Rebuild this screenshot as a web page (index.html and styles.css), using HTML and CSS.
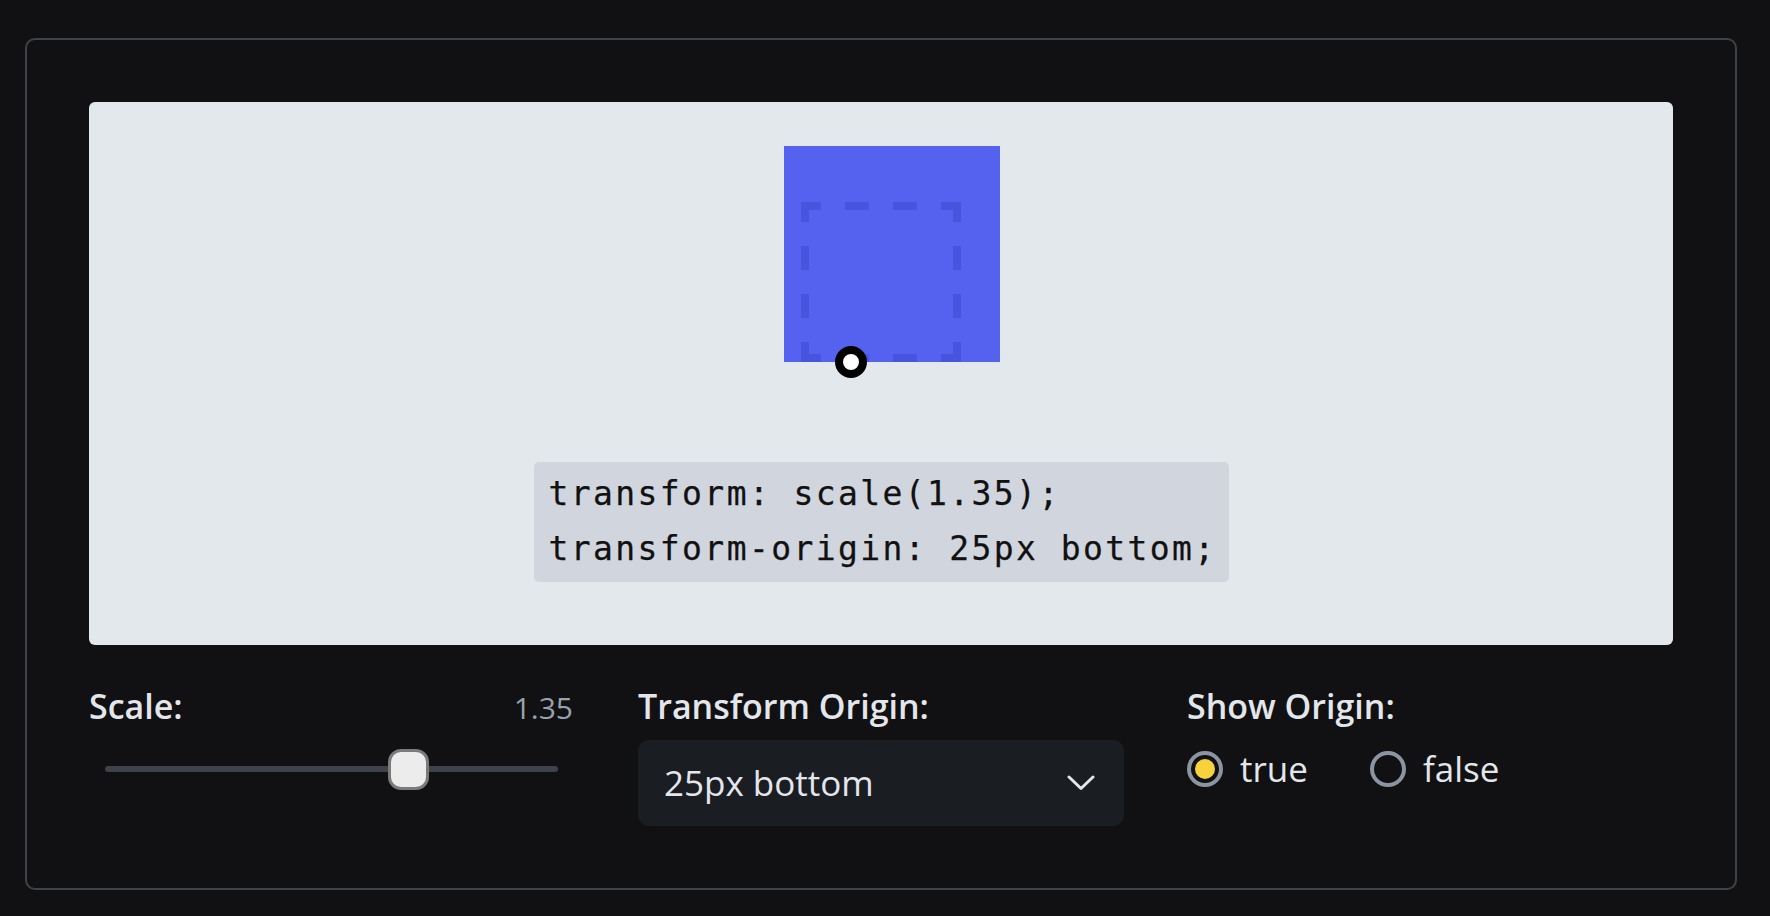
FILE: index.html
```html
<!DOCTYPE html>
<html lang="en">
<head>
<meta charset="utf-8">
<title>Transform origin demo</title>
<link rel="stylesheet" href="styles.css">
</head>
<body>
<div class="demo">
  <div class="preview">
    <div class="stage">
      <div class="scaled"></div>
      <svg class="outline" width="160" height="160" viewBox="0 0 160 160">
        <g stroke="#4654de" stroke-width="8" stroke-dasharray="20 24 24 24 24 24 20">
          <line x1="0" y1="4" x2="160" y2="4"/>
          <line x1="0" y1="156" x2="160" y2="156"/>
          <line x1="4" y1="0" x2="4" y2="160"/>
          <line x1="156" y1="0" x2="156" y2="160"/>
        </g>
      </svg>
      <div class="origin-dot"></div>
    </div>
    <pre class="code">transform: scale(1.35);
transform-origin: 25px bottom;</pre>
  </div>
  <div class="controls">
    <div class="control">
      <div class="label-row">
        <span class="label">Scale:</span>
        <span class="value">1.35</span>
      </div>
      <div class="slider">
        <div class="track">
          <div class="thumb" style="left: 67%"></div>
        </div>
      </div>
    </div>
    <div class="control">
      <div class="label-row"><span class="label">Transform Origin:</span></div>
      <div class="select">
        <span class="select-text">25px bottom</span>
        <svg class="chevron" width="28" height="16" viewBox="0 0 28 16" fill="none">
          <path d="M2 2 L14 13.5 L26 2" stroke="#e3e6ea" stroke-width="3" stroke-linecap="round" stroke-linejoin="round"/>
        </svg>
      </div>
    </div>
    <div class="control">
      <div class="label-row"><span class="label">Show Origin:</span></div>
      <div class="radios">
        <label class="radio"><span class="circle"><span class="dot"></span></span><span>true</span></label>
        <label class="radio"><span class="circle"></span><span>false</span></label>
      </div>
    </div>
  </div>
</div>
</body>
</html>
```

FILE: styles.css
```css
* { box-sizing: border-box; }
html, body { margin: 0; padding: 0; }
body {
  background: #111113;
  font-family: "Open Sans", Lato, sans-serif;
  color: #e3e6ea;
  padding: 38px 0 0 25px;
  min-height: 916px;
}
.demo {
  width: 1712px;
  height: 852px;
  border: 2px solid #3f4248;
  border-radius: 10px;
  padding: 62px;
  display: flex;
  flex-direction: column;
}
.preview {
  height: 543px;
  background: #e3e8ec;
  border-radius: 6px;
  padding-top: 100px;
  display: flex;
  flex-direction: column;
  align-items: center;
}
.stage {
  position: relative;
  width: 160px;
  height: 160px;
}
.scaled {
  position: absolute;
  left: -17px;
  top: -56px;
  width: 216px;
  height: 216px;
  background: #5462ef;
}
.outline {
  position: absolute;
  left: 0;
  top: 0;
  display: block;
}
.origin-dot {
  position: absolute;
  left: 34px;
  top: 144px;
  width: 32px;
  height: 32px;
  border-radius: 50%;
  background: #fff;
  border: 8px solid #000;
}
.code {
  margin: 100px 0 0;
  width: 695px;
  height: 120px;
  padding: 4px 0 0 15px;
  background: #d1d5de;
  border-radius: 5px;
  font-family: "DejaVu Sans Mono", "Liberation Mono", monospace;
  font-size: 33px;
  letter-spacing: 2.4px;
  line-height: 55px;
  color: #111;
  -webkit-text-stroke: 0.25px #111;
  white-space: pre;
  overflow: hidden;
}
.controls {
  margin-top: 43px;
  display: grid;
  grid-template-columns: repeat(3, 486px);
  column-gap: 63px;
}
.label-row {
  display: flex;
  justify-content: space-between;
  align-items: baseline;
  height: 36px;
  margin-bottom: 16px;
}
.label {
  font-size: 34px;
  line-height: 36px;
  font-weight: 600;
  color: #e3e6ea;
}
.value {
  font-size: 30px;
  line-height: 36px;
  font-weight: 400;
  color: #98a2ae;
  margin-right: 2px;
}
.slider {
  height: 58px;
  display: flex;
  align-items: center;
  padding: 0 17px 0 16px;
}
.track {
  position: relative;
  flex: 1;
  height: 6px;
  border-radius: 3px;
  background: #3e434b;
}
.thumb {
  position: absolute;
  top: -17.5px;
  width: 41px;
  height: 41px;
  margin-left: -20.5px;
  border-radius: 13px;
  background: #ececec;
  border: 3px solid #7b7b7b;
}
.select {
  height: 86px;
  background: #1a1d22;
  border-radius: 11px;
  display: flex;
  align-items: center;
  justify-content: space-between;
  padding: 0 29px 0 26px;
}
.select-text {
  font-size: 35px;
  line-height: 36px;
  color: #e3e6ea;
}
.chevron { display: block; }
.radios {
  height: 58px;
  display: flex;
  align-items: center;
  gap: 62px;
}
.radio {
  display: flex;
  align-items: center;
  gap: 17px;
  font-size: 35px;
  line-height: 36px;
  color: #e3e6ea;
}
.circle {
  width: 36px;
  height: 36px;
  border-radius: 50%;
  border: 4px solid #8b95a2;
  display: flex;
  align-items: center;
  justify-content: center;
}
.dot {
  width: 20px;
  height: 20px;
  border-radius: 50%;
  background: #f7d23c;
}
```
